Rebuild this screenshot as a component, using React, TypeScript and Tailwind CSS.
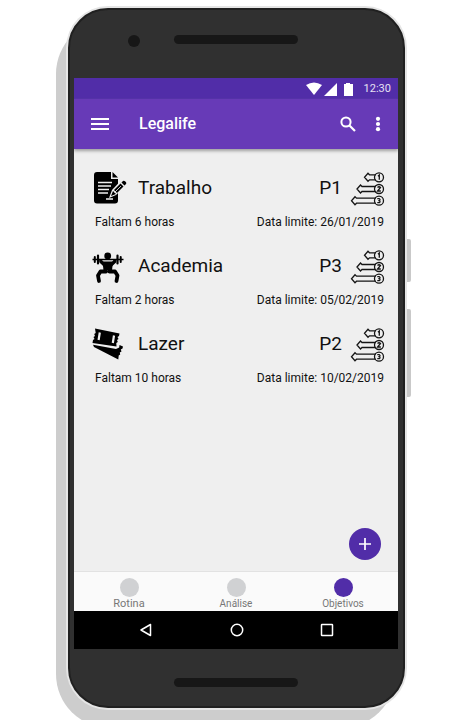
import React from "react";

type Goal = {
  name: string;
  remaining: string;
  deadline: string;
  priority: string;
  icon: React.ReactNode;
};

function WorkIcon() {
  return (
    <svg viewBox="0 0 36 36" className="size-9" aria-hidden="true">
      <path d="M5 2h14v7h7v21.500a3 3 0 0 1-3 3H5a3 3 0 0 1-3-3V5a3 3 0 0 1 3-3z" fill="#000" />
      <path d="M20.500 2l5.500 5.500h-5.500z" fill="#000" />
      <path d="M6 12.500h14M6 16h13M6 19.500h11M6 23h10M14 29h7" stroke="#efefef" strokeWidth="1.500" />
      <path d="M17 28l3-8L30 9.500l5 4.500L24 25z" fill="#efefef" />
      <path d="M19 26l2-5 3 3z" fill="#000" />
      <path d="M22 20l6.500-6.500 3 3-6.500 6.500z" fill="#000" />
      <path d="M29.500 12.500l1.500-1.500q1-.8 2 .2l.8.800q1 1 .2 2L32.500 15.500z" fill="#000" />
      <path d="M22.500 22.500l6.500-6.500" stroke="#efefef" strokeWidth="0.800" />
    </svg>
  );
}

function GymIcon() {
  return (
    <svg viewBox="0 0 36 36" className="size-9" aria-hidden="true">
      <circle cx="15.700" cy="8" r="3.400" fill="#000" />
      <path d="M0.500 11.500h31" stroke="#000" strokeWidth="1.500" />
      <path d="M6 7.500v8M25.500 7.500v8" stroke="#000" strokeWidth="2.200" strokeLinecap="round" />
      <path d="M2.800 9v5M28.700 9v5" stroke="#000" strokeWidth="2" strokeLinecap="round" />
      <path d="M8.800 11.500v2l3.700 3.500h6.500l3.700-3.500v-2" stroke="#000" strokeWidth="3.200" fill="none" strokeLinejoin="round" />
      <path d="M10.500 13.500h10.500l-1 9h-8.500z" fill="#000" />
      <path d="M14 23.500H8.500l-2.500 4 1 5.500M17.500 23.500H23l2.500 4-1 5.500" stroke="#000" strokeWidth="3.800" fill="none" strokeLinecap="round" strokeLinejoin="round" />
    </svg>
  );
}

function TicketIcon() {
  return (
    <svg viewBox="0 0 36 36" className="size-9" aria-hidden="true">
      <path d="M3 2.500L27.500 7.500l-.5 2.500-1.500 1 1 2-1.500 1 .8 2-1.500 1 .2 3.500L.5 17l.5-3 1.500-1-1-2 1.500-1-.8-2 1.500-1z" fill="#000" />
      <path d="M7.800 6.500l-1.200 7.500M22 9.500l-1.200 7.500" stroke="#efefef" strokeWidth="2.200" />
      <path d="M1 18.800l23 4.200 3.200-1.500.3-2.500 3.500 1.500-.5 2-1.700 1 .7 2-1.700 1 .4 2-1.500 1-.4 4L2 21z" fill="#000" />
    </svg>
  );
}

function PriorityIcon() {
  return (
    <svg viewBox="0 0 36 36" className="size-9" fill="none" stroke="#151515" strokeWidth="1.300" aria-hidden="true">
      <path d="M26.800 4.800H20.500L19 3.300l-3.500 4 3.500 4 1.500-1.500h6.300M26.800 16.500H13L11.500 15 8 19l3.500 4 1.500-1.500h13.800M26.800 28.200H7.500L6 26.700l-3.500 4 3.500 4 1.500-1.500h19.300" />
      <circle cx="30" cy="7.300" r="4.500" />
      <circle cx="30" cy="19" r="4.500" />
      <circle cx="30" cy="30.700" r="4.500" />
      <path d="M29 6.300l1.300-1.300v4.700M28.500 17.500q1.500-1.500 3 0l-3 3.500h3.300M28.300 28.700h2q1.500 1 0 2h-1M30.300 30.700q1.500 1 0 2h-2" />
    </svg>
  );
}

const goals: Goal[] = [
  { name: "Trabalho", remaining: "Faltam 6 horas", deadline: "26/01/2019", priority: "P1", icon: <WorkIcon /> },
  { name: "Academia", remaining: "Faltam 2 horas", deadline: "05/02/2019", priority: "P3", icon: <GymIcon /> },
  { name: "Lazer", remaining: "Faltam 10 horas", deadline: "10/02/2019", priority: "P2", icon: <TicketIcon /> },
];

const tabs = [
  { label: "Rotina", dot: "bg-[#d0d1d3]", text: "text-[11px]" },
  { label: "Análise", dot: "bg-[#d0d1d3]", text: "text-[10px]" },
  { label: "Objetivos", dot: "bg-[#512da8]", text: "text-[10px]" },
];

function StatusBar() {
  return (
    <div className="flex h-[21px] items-center justify-end bg-[#512da8] pr-[7px] text-white">
      <svg viewBox="0 0 48 14" className="mr-2.5 h-3.5 w-12" fill="currentColor" aria-hidden="true">
        <path d="M0 3q8-5 16 0L8 13z" />
        <path d="M31 1v13H18z" />
        <path d="M38 2h2V1h4v1h3v12h-9z" />
      </svg>
      <span className="text-[11px] leading-4 text-[#e6e0f3]">12:30</span>
    </div>
  );
}

function AppBar() {
  return (
    <header className="relative flex h-[50px] items-center bg-[#673ab7] pr-4 pl-[17px] text-white shadow-[0_2px_3px_#9e9e9e]">
      <button type="button" aria-label="Menu" className="mr-[30px]">
        <svg viewBox="0 0 18 12" className="h-3 w-[18px]" aria-hidden="true">
          <path d="M0 1h18M0 6h18M0 11h18" stroke="currentColor" strokeWidth="1.800" />
        </svg>
      </button>
      <h1 className="grow text-base font-medium">Legalife</h1>
      <button type="button" aria-label="Pesquisar" className="mr-[18px]">
        <svg viewBox="0 0 16 16" className="size-4" fill="none" stroke="currentColor" strokeWidth="2" aria-hidden="true">
          <circle cx="6" cy="6" r="4.600" />
          <path d="M9.500 9.500l5.500 5.500" strokeWidth="2.200" />
        </svg>
      </button>
      <button type="button" aria-label="Mais opções">
        <svg viewBox="0 0 8 16" className="h-4 w-2" fill="currentColor" aria-hidden="true">
          <circle cx="4" cy="2.800" r="2.100" />
          <circle cx="4" cy="8" r="2.100" />
          <circle cx="4" cy="13.200" r="2.100" />
        </svg>
      </button>
    </header>
  );
}

function GoalRow({ goal }: { goal: Goal }) {
  return (
    <li className="h-[78px]">
      <div className="flex items-center">
        {goal.icon}
        <h2 className="ml-2.5 grow text-[19px] leading-8">{goal.name}</h2>
        <span className="mr-[7px] text-[19px] leading-8">{goal.priority}</span>
        <PriorityIcon />
      </div>
      <div className="mt-2 flex justify-between pr-px pl-[3px] text-xs leading-4">
        <span>{goal.remaining}</span>
        <span>Data limite: {goal.deadline}</span>
      </div>
    </li>
  );
}

export default function App() {
  return (
    <div className="h-screen overflow-hidden bg-white pt-2 pr-[65px] pl-[68px] font-['Roboto',sans-serif] text-[#111]">
      <div className="relative">
        <div className="absolute top-3 right-2.5 -bottom-5 -left-3 rounded-[54px] bg-[#cdcdcd]" />
        <div className="absolute top-[231px] -right-1.5 h-[43px] w-2 rounded-xs bg-[#c9c9c9]" />
        <div className="absolute top-[301px] -right-1.5 h-[88px] w-2 rounded-xs bg-[#c9c9c9]" />
        <div className="relative rounded-[40px] border-2 border-[#202020] bg-[#303030] pr-[5px] pl-1 shadow-[0_0_0_2px_#e5e5e5]">
          <div className="flex h-[68px] items-start pt-[25px] pl-[54px]">
            <div className="size-3 rounded-full bg-[#171717]" />
            <div className="mr-[100px] ml-[34px] h-[9px] grow rounded-full bg-[#171717]" />
          </div>
          <div className="overflow-hidden bg-[#efefef]">
            <StatusBar />
            <AppBar />
            <main className="flex h-[422px] flex-col pt-[21px] pr-[13px] pl-[18px]">
              <ul className="grow">
                {goals.map((goal) => (
                  <GoalRow key={goal.name} goal={goal} />
                ))}
              </ul>
              <button type="button" aria-label="Adicionar objetivo" className="mr-1 mb-[11px] flex size-8 items-center justify-center self-end rounded-full bg-[#512da8] text-white">
                <svg viewBox="0 0 12 12" className="size-3" aria-hidden="true">
                  <path d="M6 0v12M0 6h12" stroke="currentColor" strokeWidth="1.700" />
                </svg>
              </button>
            </main>
            <nav className="flex h-10 justify-between border-t border-[#e2e2e2] bg-[#fafafa] px-[25px] pt-1.5">
              {tabs.map((tab) => (
                <button type="button" key={tab.label} className={`flex w-15 flex-col items-center text-[#777] ${tab.text}`}>
                  <span className={`size-[19px] rounded-full ${tab.dot}`} />
                  <span className="leading-[14px]">{tab.label}</span>
                </button>
              ))}
            </nav>
            <div className="flex h-[38px] items-center justify-between bg-black pr-16 pl-[65px] text-white">
              <button type="button" aria-label="Voltar">
                <svg viewBox="0 0 14 14" className="size-3.5" fill="none" stroke="currentColor" strokeWidth="1.500" aria-hidden="true">
                  <path d="M11.500 1.500v11L2 7z" strokeLinejoin="round" />
                </svg>
              </button>
              <button type="button" aria-label="Início">
                <svg viewBox="0 0 14 14" className="size-3.5" fill="none" stroke="currentColor" strokeWidth="1.500" aria-hidden="true">
                  <circle cx="7" cy="7" r="5.700" />
                </svg>
              </button>
              <button type="button" aria-label="Recentes">
                <svg viewBox="0 0 14 14" className="size-3.5" fill="none" stroke="currentColor" strokeWidth="1.500" aria-hidden="true">
                  <rect x="1.500" y="1.500" width="11" height="11" rx="0.500" />
                </svg>
              </button>
            </div>
          </div>
          <div className="flex h-[57px] items-center pt-2.5 pr-[100px] pl-[100px]">
            <div className="h-[9px] grow rounded-full bg-[#171717]" />
          </div>
        </div>
      </div>
    </div>
  );
}
